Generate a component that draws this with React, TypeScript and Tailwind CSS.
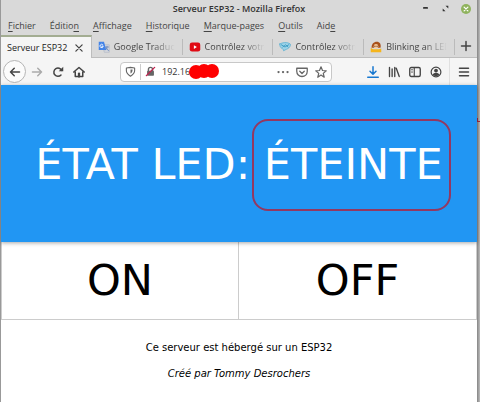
import React from 'react';

const menus = [
  { before: '', key: 'F', after: 'ichier' },
  { before: 'Éditio', key: 'n', after: '' },
  { before: '', key: 'A', after: 'ffichage' },
  { before: '', key: 'H', after: 'istorique' },
  { before: '', key: 'M', after: 'arque-pages' },
  { before: '', key: 'O', after: 'utils' },
  { before: 'Aid', key: 'e', after: '' },
];

interface IconProps {
  children: React.ReactNode;
  className?: string;
}

// All line icons share a 16 unit grid
const Icon: React.FC<IconProps> = ({ children, className = 'size-3' }) => (
  <svg
    viewBox="0 0 16 16"
    className={`shrink-0 ${className}`}
    fill="none"
    stroke="currentColor"
    strokeWidth="2"
    strokeLinecap="round"
    strokeLinejoin="round"
    aria-hidden="true"
  >
    {children}
  </svg>
);

const TranslateIcon = () => (
  <Icon>
    <path d="M6 5h9v10H9z" fill="#d5d8de" stroke="#b3bac6" strokeWidth="1" />
    <path d="M1 1h7l3 11H1z" fill="#4384e8" stroke="none" />
    <path d="M6.500 5.200A2.200 2.200 0 1 0 7 7H5" stroke="#fff" strokeWidth="1.200" />
    <path d="M10 8h4M12 7v1c0 2-1 3-2 4M11 9l3 4" stroke="#5c7fb8" strokeWidth="1" />
  </Icon>
);

const VideoIcon = () => (
  <Icon>
    <rect x="1" y="2" width="14" height="12" rx="3" fill="#e00b14" stroke="none" />
    <path d="M6.500 5.500v5l4-2.500z" fill="#fff" stroke="none" />
  </Icon>
);

const CloudIcon = () => (
  <Icon>
    <path d="M1 4c3-2 10-3 14 0 1 3-2 6-5 7l-4 2c1-2-1-2-2-3C2 9 1 7 1 4z" fill="#9ed3e8" stroke="#55aed0" strokeWidth="1" />
    <path d="M3 5l5 3 5-3M5 8l4-3 3 3" stroke="#3a9cc3" strokeWidth="1.200" />
  </Icon>
);

const PersonIcon = () => (
  <Icon>
    <path d="M2 9c0-5 3-8 7-8s6 3 5 8z" fill="#a8511b" stroke="none" />
    <circle cx="8" cy="7" r="3" fill="#f7c99a" stroke="none" />
    <path d="M1 15V9l3 2h8l3-1v5z" fill="#f5b51c" stroke="none" />
    <path d="M6 7h1M9 7h1" stroke="#5a2a10" strokeWidth="1" />
  </Icon>
);

const tabs = [
  { title: 'Google Traduct', icon: <TranslateIcon /> },
  { title: 'Contrôlez votre', icon: <VideoIcon /> },
  { title: 'Contrôlez votre', icon: <CloudIcon /> },
  { title: 'Blinking an LED', icon: <PersonIcon /> },
];

const TitleBar = () => (
  <div className="relative flex h-[17px] items-center justify-end gap-[11px] pr-1.5">
    <p className="absolute inset-x-0 top-0 text-center text-[9px] leading-[18px] font-semibold text-[#333]">
      Serveur ESP32 - Mozilla Firefox
    </p>
    <button aria-label="Réduire" className="relative text-[#333]">
      <Icon className="size-[9px]">
        <path d="M5 7h6" strokeWidth="3" />
      </Icon>
    </button>
    <button aria-label="Agrandir" className="relative text-[#333]">
      <Icon className="size-[9px]">
        <path d="M8 3h5v5zM3 8v5h5z" fill="currentColor" stroke="none" />
      </Icon>
    </button>
    <button aria-label="Fermer" className="relative text-white">
      <Icon className="size-[10px]">
        <circle cx="8" cy="8" r="8" fill="#8fb35d" stroke="none" />
        <path d="M5 5l6 6M11 5l-6 6" />
      </Icon>
    </button>
  </div>
);

const MenuBar = () => (
  <nav className="flex h-[18px] items-center gap-3.5 pl-[7px] text-[9px] leading-4">
    {menus.map(({ before, key, after }) => (
      <button key={before + key}>
        {before}
        <span className="underline underline-offset-2">{key}</span>
        {after}
      </button>
    ))}
  </nav>
);

const TabBar = () => (
  <div className="grid h-[23px] grid-cols-[repeat(5,minmax(0,1fr))_22px] border-b border-[#bdbdbd] text-[9px] leading-4">
    <div className="-mb-px flex items-center justify-between border-t-2 border-r border-t-[#a3ad92] border-r-[#bdbdbd] bg-[#f5f5f5] pr-[7px] pl-1.5">
      <button className="whitespace-nowrap text-[#222]">Serveur ESP32</button>
      <button aria-label="Fermer l'onglet">
        <Icon className="size-[10px]">
          <path d="M3 3l10 10M13 3L3 13" />
        </Icon>
      </button>
    </div>
    {tabs.map(({ title, icon }, index) => (
      <button key={index} className="flex items-center gap-1 pt-0.5 pl-1.5 text-left">
        {icon}
        <span className="min-w-0 flex-1 overflow-hidden whitespace-nowrap [mask-image:linear-gradient(to_right,black_60%,transparent_95%)]">
          {title}
        </span>
        <span className="h-4 w-px bg-[#bbb]" />
      </button>
    ))}
    <button aria-label="Nouvel onglet" className="flex items-center justify-center">
      <Icon>
        <path d="M8 2v12M2 8h12" />
      </Icon>
    </button>
  </div>
);

const AddressBar = () => (
  <div className="relative flex h-5 min-w-0 flex-1 items-center rounded-sm border border-[#c8c8c8] bg-white pr-1 pl-1">
    <Icon className="size-[11px] text-[#666]">
      <path d="M2 3l6-1 6 1v4c0 4-3 6-6 8-3-2-6-4-6-8z" strokeWidth="1.600" />
      <path d="M8 5v6c2-1 3-3 3-6z" fill="currentColor" stroke="none" />
    </Icon>
    <span className="mx-1 h-4 w-px bg-[#ccc]" />
    <Icon className="size-[11px] text-[#666]">
      <path d="M5 7V5a3 3 0 0 1 6 0v2" />
      <rect x="3" y="7" width="10" height="7" rx="1" fill="currentColor" stroke="none" />
      <path d="M2 14L14 2" stroke="#c4224f" />
    </Icon>
    <input
      type="text"
      aria-label="Adresse"
      defaultValue="192.16"
      className="ml-1.5 min-w-0 flex-1 bg-transparent text-[9px] leading-4 text-[#333] outline-none"
    />
    <svg viewBox="0 0 30 15" className="absolute left-[68px] h-[15px] w-[30px]" aria-hidden="true">
      <g fill="#fe0000">
        <circle cx="7" cy="8" r="7" />
        <circle cx="15" cy="7" r="7" />
        <circle cx="23" cy="7" r="7" />
      </g>
    </svg>
    <div className="flex gap-[7px] text-[#666]">
      <button aria-label="Actions de la page">
        <Icon>
          <path d="M2 8h.1M8 8h.1M14 8h.1" strokeWidth="3" />
        </Icon>
      </button>
      <button aria-label="Pocket">
        <Icon>
          <path d="M1 3h14v4c0 4-3 7-7 7s-7-3-7-7zM5 7l3 3 3-3" strokeWidth="1.700" />
        </Icon>
      </button>
      <button aria-label="Marquer cette page">
        <Icon>
          <path d="M8 1l2 5 5 .4-4 3.400 1.300 5.200L8 12l-4.300 3L5 9.800 1 6.400 6 6z" strokeWidth="1.600" />
        </Icon>
      </button>
    </div>
  </div>
);

const Toolbar = () => (
  <div className="flex h-[27px] items-center bg-[#f5f5f5] text-[#444]">
    <div className="flex items-center gap-[9px] pl-0.5">
      <button
        aria-label="Précédent"
        className="flex size-[23px] items-center justify-center rounded-full border border-[#b5b5b5] bg-[#fbfbfb]"
      >
        <Icon>
          <path d="M14 8H2M7 3L2 8l5 5" />
        </Icon>
      </button>
      <button aria-label="Suivant" className="-ml-1 text-[#aaa]">
        <Icon>
          <path d="M2 8h12M9 3l5 5-5 5" />
        </Icon>
      </button>
      <button aria-label="Actualiser">
        <Icon>
          <path d="M12 12a5.500 5.500 0 1 1 1-6" />
          <path d="M15 1v6H9z" fill="currentColor" stroke="none" />
        </Icon>
      </button>
      <button aria-label="Accueil">
        <Icon>
          <path d="M1 8l7-6 7 6M3 8v6h10V8" />
          <path d="M8 14v-4" strokeWidth="3" />
        </Icon>
      </button>
    </div>
    <div className="ml-[35px] flex min-w-0 flex-1">
      <AddressBar />
    </div>
    <div className="ml-[35px] flex items-center gap-[9px]">
      <button aria-label="Téléchargements" className="text-[#1878d0]">
        <Icon>
          <path d="M8 1v9M4 7l4 4 4-4M1 15h14" />
        </Icon>
      </button>
      <button aria-label="Bibliothèque">
        <Icon>
          <path d="M2 2v12M5.500 4v10M9 2v12M11 3l4 11" strokeWidth="1.800" />
        </Icon>
      </button>
      <button aria-label="Panneaux latéraux">
        <Icon>
          <rect x="1" y="2" width="14" height="12" rx="2" strokeWidth="1.800" />
          <path d="M7 2v12M3.500 5h1M3.500 8h1" strokeWidth="1.500" />
        </Icon>
      </button>
      <button aria-label="Compte">
        <Icon>
          <circle cx="8" cy="8" r="6.500" strokeWidth="1.600" />
          <circle cx="8" cy="6" r="2.500" fill="currentColor" stroke="none" />
          <path d="M3.500 12c1-4 8-4 9 0-2 2-7 2-9 0z" fill="currentColor" stroke="none" />
        </Icon>
      </button>
    </div>
    <span className="ml-[7px] h-[27px] w-px bg-[#e0e0e0]" />
    <button aria-label="Menu" className="pr-[7px] pl-2">
      <Icon>
        <path d="M2 3h12M2 8h12M2 13h12" />
      </Icon>
    </button>
  </div>
);

const LedPage = () => (
  <main className="flex-1 bg-white font-['DejaVu_Sans',sans-serif] text-black">
    <header className="relative flex h-[157px] items-center justify-center bg-[#2196f3] shadow-[0_1px_4px_rgba(0,0,0,0.35)]">
      <h1 className="text-[43px] leading-[52px] whitespace-nowrap text-white">
        ÉTAT LED:{' '}
        <span className="relative">
          ÉTEINTE
          <i className="absolute -top-5 -right-2 -bottom-[22px] -left-3 rounded-2xl border-2 border-[#b0203c]/80" />
        </span>
      </h1>
    </header>
    <div className="grid grid-cols-2 border-r border-b border-l border-[#ccc] text-[43px] leading-[77px]">
      <button className="border-r border-[#ccc]">ON</button>
      <button>OFF</button>
    </div>
    <footer className="space-y-2.5 pt-5 text-center text-[10px] leading-4">
      <p>Ce serveur est hébergé sur un ESP32</p>
      <p className="italic">Créé par Tommy Desrochers</p>
    </footer>
  </main>
);

const App = () => (
  <div className="flex min-h-screen bg-[#a9a9a9]">
    <div className="flex min-w-0 flex-1 flex-col border-l border-[#999] bg-[#d9d9d9] font-['Open_Sans',sans-serif] text-[#444]">
      <TitleBar />
      <MenuBar />
      <TabBar />
      <Toolbar />
      <LedPage />
    </div>
    <div className="w-[3px] bg-linear-to-r from-[#858585] to-[#bdbdbd] pt-[118px]">
      <div className="h-1 border-b border-l border-[#a5283f]" />
    </div>
  </div>
);

export default App;
